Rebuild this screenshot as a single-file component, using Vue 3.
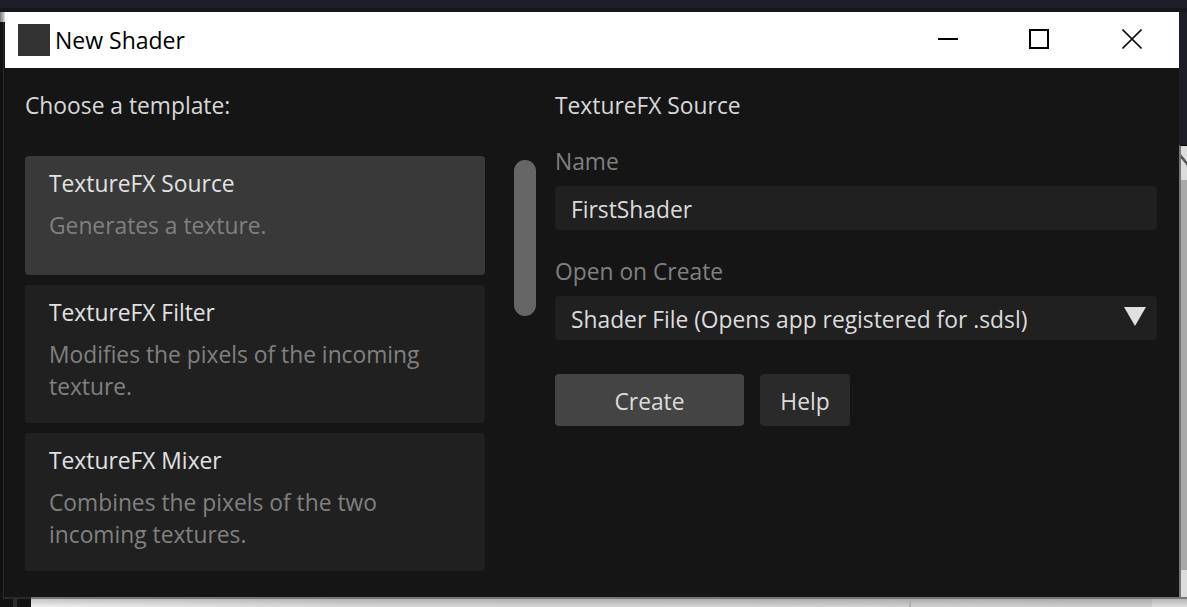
<script setup>
const templates = [
  { title: 'TextureFX Source', text: 'Generates a texture.', active: true },
  { title: 'TextureFX Filter', text: 'Modifies the pixels of the incoming texture.' },
  { title: 'TextureFX Mixer', text: 'Combines the pixels of the two incoming textures.' },
]
</script>

<template>
  <div class="desktop">
    <div class="top-edge"></div>
    <div class="left-tab"></div>
    <div class="left-line"></div>
    <div class="bottom-line"></div>
    <div class="bottom-tick"></div>
    <div class="backdrop-right">
      <svg class="backdrop-mark" width="6" height="14" viewBox="0 0 6 14"><path d="M-1 1L7 11" stroke="#555" stroke-width="2.4" fill="none" /></svg>
      <div class="backdrop-mid"></div>
    </div>
    <div class="backdrop-bottom">
      <div class="bottom-divider"></div>
    </div>
    <div class="window">
      <header class="titlebar">
        <span class="app-icon"></span>
        <span class="window-title">New Shader</span>
        <div class="window-controls">
          <svg class="ctl ctl-min" width="20" height="20" viewBox="0 0 20 20"><path d="M0 10H20" stroke="#000" stroke-width="2" /></svg>
          <svg class="ctl ctl-max" width="20" height="20" viewBox="0 0 20 20"><rect x="1" y="1" width="18" height="18" fill="none" stroke="#000" stroke-width="2" /></svg>
          <svg class="ctl ctl-close" width="20" height="20" viewBox="0 0 20 20"><path d="M0.5 0.5L19.5 19.5M19.5 0.5L0.5 19.5" stroke="#111" stroke-width="1.6" /></svg>
        </div>
      </header>
      <main class="content">
        <section class="left">
          <h2 class="heading">Choose a template:</h2>
          <div class="list-wrap">
            <div class="list">
              <div v-for="t in templates" :key="t.title" class="card" :class="{ active: t.active }">
                <div class="card-title">{{ t.title }}</div>
                <div class="card-text">{{ t.text }}</div>
              </div>
            </div>
            <div class="scroll-thumb"></div>
          </div>
        </section>
        <section class="right">
          <h2 class="heading">TextureFX Source</h2>
          <label class="label first">Name</label>
          <div class="field">FirstShader</div>
          <label class="label">Open on Create</label>
          <div class="field select">
            <span>Shader File (Opens app registered for .sdsl)</span>
            <svg width="22" height="20" viewBox="0 0 22 20"><path d="M0 0H22L11 19Z" fill="#e0e0e0" /></svg>
          </div>
          <div class="buttons">
            <button class="btn primary">Create</button>
            <button class="btn">Help</button>
          </div>
        </section>
      </main>
    </div>
  </div>
</template>

<style scoped>
.desktop {
  position: relative;
  width: 1187px;
  height: 607px;
  overflow: hidden;
  background: #121212;
  font-family: "Open Sans", "Noto Sans", sans-serif;
}
.top-edge {
  position: absolute;
  left: 0;
  right: 0;
  top: 0;
  height: 12px;
  background: linear-gradient(#1e1e28 0, #1e1e28 8px, #16161d 8px);
}
.left-tab {
  position: absolute;
  left: 0;
  top: 12px;
  width: 5px;
  height: 10px;
  background: linear-gradient(90deg, #777, #ddd);
}
.left-line {
  position: absolute;
  left: 3px;
  top: 22px;
  width: 1px;
  height: 575px;
  background: #2a2a2a;
}
.bottom-line {
  position: absolute;
  left: 3px;
  top: 597px;
  width: 28px;
  height: 2px;
  background: #2a2a2a;
}
.bottom-tick {
  position: absolute;
  left: 13px;
  top: 599px;
  width: 4px;
  height: 8px;
  background: #2e2e2e;
}
.backdrop-right {
  position: absolute;
  left: 1179px;
  top: 12px;
  right: 0;
  bottom: 0;
  background: #1e1e28;
}
.backdrop-mid {
  position: absolute;
  left: 0;
  right: 0;
  top: 133px;
  bottom: 0;
  border-top: 1px solid #000;
  border-left: 2px solid #777;
  background: linear-gradient(#dcdcdc 0, #dcdcdc 34px, #a9a9a9 34px, #a9a9a9 424px, #dcdcdc 424px);
}
.backdrop-mark {
  position: absolute;
  right: 0;
  top: 142px;
  z-index: 1;
}
.backdrop-bottom {
  position: absolute;
  left: 31px;
  top: 597px;
  right: 0;
  bottom: 0;
  border-top: 2px solid #777;
  background:
    linear-gradient(rgba(0, 0, 0, 0.18), rgba(0, 0, 0, 0)),
    linear-gradient(90deg, #f0f0f0, #d8d8d8 30%, #d0d0d0 97%, #dedede 97%);
}
.bottom-divider {
  position: absolute;
  left: 878px;
  top: 0;
  bottom: 0;
  width: 2px;
  background: #b0b0b0;
}
.window {
  position: absolute;
  left: 5px;
  top: 12px;
  width: 1174px;
  height: 585px;
  display: flex;
  flex-direction: column;
  background: #151515;
}
.titlebar {
  height: 56px;
  flex: none;
  display: flex;
  align-items: center;
  background: #fff;
  padding-left: 13px;
}
.app-icon {
  width: 32px;
  height: 32px;
  background: #333;
}
.window-title {
  margin-left: 5px;
  font-size: 23px;
  color: #000;
}
.window-controls {
  margin-left: auto;
  margin-top: -2px;
  display: flex;
  align-items: center;
  gap: 73px;
  padding-right: 37px;
}
.ctl {
  display: block;
}
.ctl-max {
  margin-left: -2px;
}
.content {
  flex: 1;
  display: flex;
  padding: 0 22px 0 20px;
  min-height: 0;
}
.left {
  width: 511px;
  flex: none;
}
.right {
  flex: 1;
  margin-left: 19px;
}
.heading {
  margin: 0;
  height: 88px;
  padding-top: 22px;
  box-sizing: border-box;
  font-size: 22.8px;
  line-height: 32px;
  font-weight: 400;
  color: #d8d8d8;
}
.list-wrap {
  position: relative;
}
.list {
  width: 460px;
  display: flex;
  flex-direction: column;
  gap: 10px;
}
.card {
  box-sizing: border-box;
  height: 138px;
  padding: 12px 24px;
  border-radius: 4px;
  background: #202020;
}
.card.active {
  height: 119px;
  background: #393939;
}
.card-title {
  font-size: 22.8px;
  line-height: 32px;
  color: #e2e2e2;
}
.card-text {
  margin-top: 10px;
  font-size: 22.8px;
  line-height: 32px;
  color: #808080;
}
.scroll-thumb {
  position: absolute;
  left: 489px;
  top: 4px;
  width: 22px;
  height: 156px;
  border-radius: 11px;
  background: #666;
}
.label {
  display: block;
  margin-top: 26px;
  font-size: 22.8px;
  line-height: 32px;
  color: #808080;
}
.label.first {
  margin-top: -10px;
}
.field {
  box-sizing: border-box;
  height: 44px;
  margin-top: 8px;
  padding: 2px 16px 0;
  display: flex;
  align-items: center;
  justify-content: space-between;
  border-radius: 4px;
  background: #202020;
  font-size: 22.8px;
  color: #dcdcdc;
}
.select svg {
  margin-right: -5px;
  margin-top: -4px;
}
.buttons {
  display: flex;
  gap: 16px;
  margin-top: 34px;
}
.btn {
  box-sizing: border-box;
  height: 52px;
  width: 90px;
  padding: 2px 0 0;
  border: none;
  border-radius: 4px;
  background: #2a2a2a;
  color: #dcdcdc;
  font: inherit;
  font-size: 22.8px;
}
.btn.primary {
  width: 189px;
  background: #444;
}
</style>
